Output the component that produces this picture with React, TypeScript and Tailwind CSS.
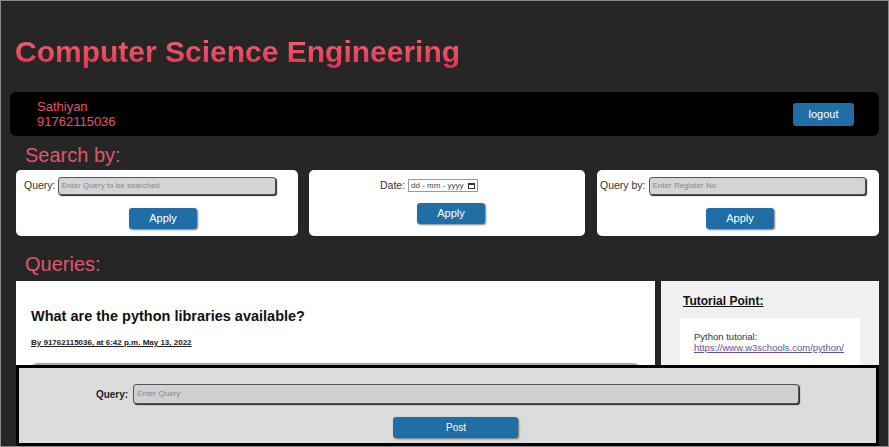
import React from "react";

const font = { fontFamily: '"Liberation Sans", Arial, sans-serif' };

function ApplyButton() {
  return (
    <button className="w-[68px] h-[21px] rounded-[3px] bg-[#1f6fa6] text-white text-[11px] shadow-[1px_1px_2px_rgba(0,0,0,0.5)]">
      Apply
    </button>
  );
}

export default function App() {
  return (
    <div
      className="relative w-[889px] h-[447px] overflow-hidden bg-[#262626] border border-[#8a8a8a]"
      style={font}
    >
      <div className="px-[14px]">
        <h1 className="pt-[31px] text-[30px] font-bold leading-[40px] bg-gradient-to-b from-[#f7929f] to-[#e2244b] bg-clip-text text-transparent inline-block">
          Computer Science Engineering
        </h1>
      </div>

      {/* user bar */}
      <div className="ml-[9px] mr-[9px] mt-[20px] h-[44px] rounded-[6px] bg-black flex items-center justify-between pl-[27px] pr-[25px]">
        <div className="text-[13px] leading-[15px] text-[#e0566b]">
          <div>Sathiyan</div>
          <div>91762115036</div>
        </div>
        <button className="w-[61px] h-[23px] rounded-[3px] bg-[#1f6fa6] text-white text-[11px]">logout</button>
      </div>

      <div className="pl-[24px] mt-[7px] text-[20px] leading-[24px] text-[#e0566b]">Search by:</div>

      {/* search cards */}
      <div className="mt-[3px] pl-[15px] flex">
        <div className="w-[282px] h-[66px] shrink-0 bg-white rounded-[5px] pt-[7px] flex flex-col">
          <div className="flex items-center pl-[8px] gap-[2px] text-[10.5px] text-[#333]">
            <span>Query:</span>
            <div className="w-[218px] h-[18px] rounded-[3px] bg-[#d4d4d4] border border-[#555] shadow-[1px_1px_1px_#222] text-[8px] text-[#888] flex items-center pl-[3px]">
              Enter Query to be searched
            </div>
          </div>
          <div className="mt-[10px] pl-[113px]"><ApplyButton /></div>
        </div>

        <div className="ml-[11px] w-[276px] h-[66px] shrink-0 bg-white rounded-[5px] pt-[8px] flex flex-col">
          <div className="flex items-center pl-[71px] gap-[3px] text-[10.5px] text-[#333]">
            <span>Date:</span>
            <div className="w-[70px] h-[13px] border border-[#999] text-[8px] text-[#444] flex items-center justify-between px-[2px]">
              <span>dd - mm - yyyy</span>
              <span className="inline-block w-[7px] h-[6px] border border-[#333] border-t-2"></span>
            </div>
          </div>
          <div className="mt-[6px] pl-[108px]"><ApplyButton /></div>
        </div>

        <div className="ml-[12px] w-[282px] h-[66px] shrink-0 bg-white rounded-[5px] pt-[7px] flex flex-col">
          <div className="flex items-center pl-[3px] gap-[3px] text-[10.5px] text-[#333]">
            <span>Query by:</span>
            <div className="w-[217px] h-[18px] rounded-[3px] bg-[#d4d4d4] border border-[#555] shadow-[1px_1px_1px_#222] text-[8px] text-[#888] flex items-center pl-[3px]">
              Enter Register No
            </div>
          </div>
          <div className="mt-[10px] pl-[109px]"><ApplyButton /></div>
        </div>
      </div>

      <div className="pl-[24px] mt-[16px] text-[20px] leading-[24px] text-[#e0566b]">Queries:</div>

      {/* queries */}
      <div className="mt-[5px] pl-[15px] flex">
        <div className="w-[639px] h-[100px] shrink-0 bg-white pl-[15px] pt-[26px]">
          <div className="text-[14.5px] font-bold text-[#111] leading-[18px]">What are the python libraries available?</div>
          <div className="mt-[12px] text-[8px] font-bold underline text-[#222]">By 91762115036, at 6:42 p.m. May 13, 2022</div>
          <div className="mt-[14px] mr-[15px] h-[20px] rounded-t-[6px] bg-[#a9a9a9]"></div>
        </div>
        <div className="ml-[6px] w-[218px] h-[100px] shrink-0 bg-[#f0f0f0] pt-[11px]">
          <div className="pl-[22px] text-[12px] font-bold underline text-[#111]">Tutorial Point:</div>
          <div className="mt-[8px] mx-[19px] h-[60px] bg-white pl-[14px] pt-[13px] text-[9.5px] leading-[11px] text-[#333]">
            <div>Python tutorial:</div>
            <div className="text-[#6b4e8a] underline">https://www.w3schools.com/python/</div>
          </div>
        </div>
      </div>

      {/* fixed post panel */}
      <div className="absolute left-[15px] top-[364px] w-[863px] h-[81px] bg-[#dcdcdc] border-[3px] border-black flex flex-col items-center">
        <div className="mt-[16px] flex items-center gap-[5px]">
          <span className="text-[10px] font-bold text-[#222]">Query:</span>
          <div className="w-[666px] h-[20px] rounded-[3px] bg-[#d0d0d0] border border-[#555] shadow-[1px_1px_1px_#222] text-[8px] text-[#888] flex items-center pl-[3px]">
            Enter Query
          </div>
        </div>
        <button className="mt-[13px] ml-[16px] w-[125px] h-[21px] rounded-[3px] bg-[#1f6fa6] text-white text-[10px] text-left pl-[53px] shadow-[1px_1px_2px_rgba(0,0,0,0.5)]">
          Post
        </button>
      </div>
    </div>
  );
}
